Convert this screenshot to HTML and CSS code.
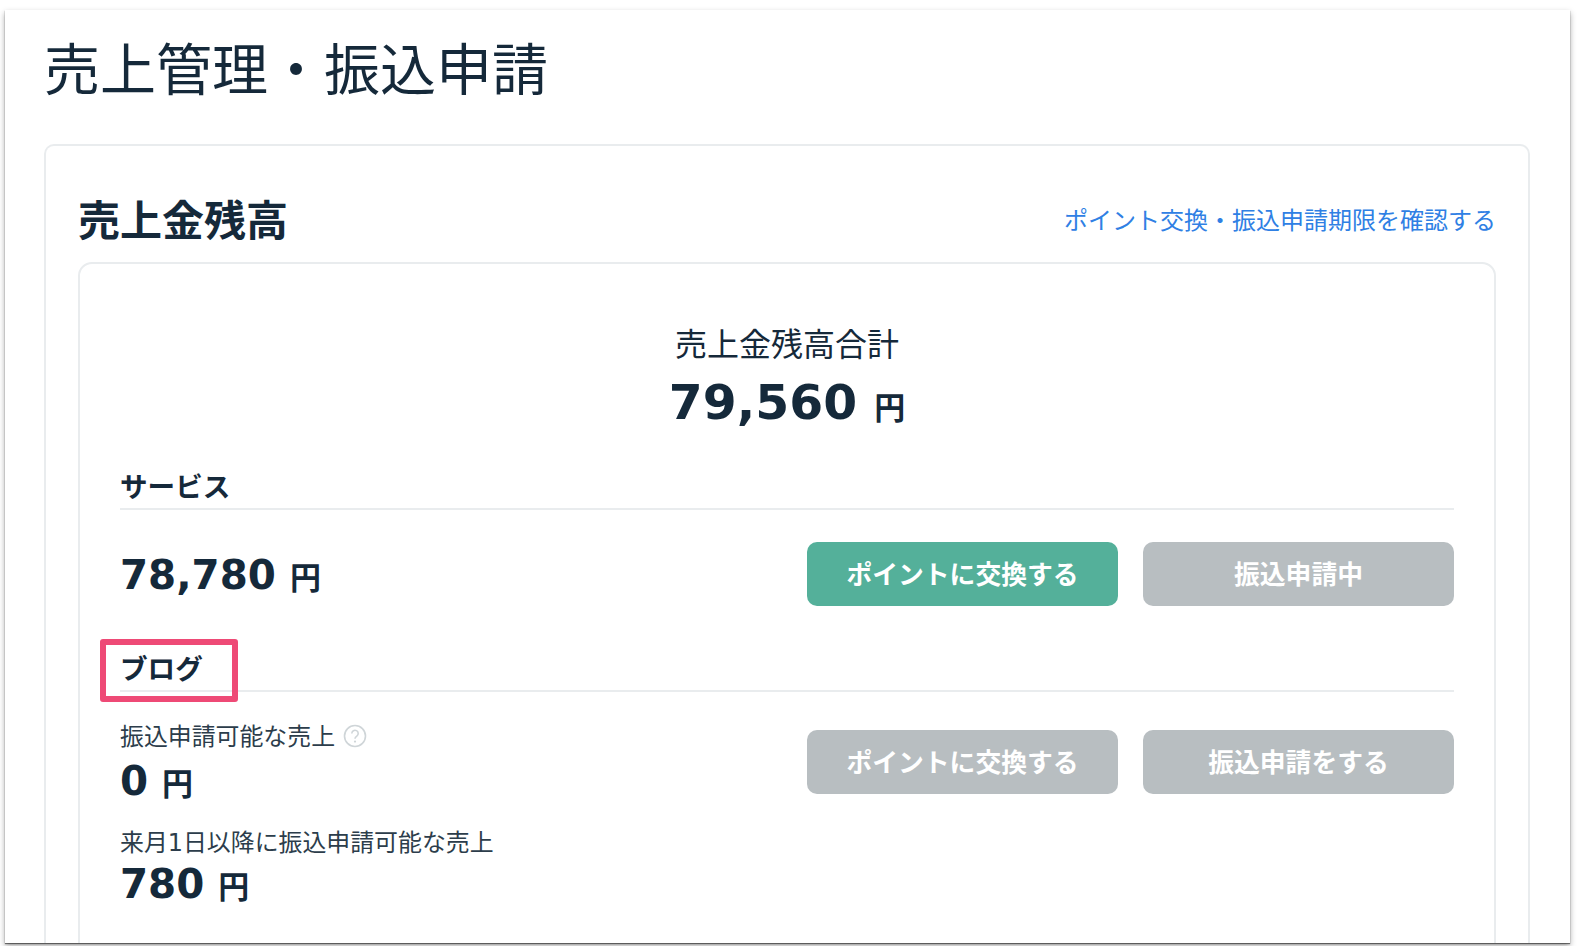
FILE: index.html
```html
<!DOCTYPE html>
<html lang="ja">
<head>
    <meta charset="UTF-8">
    <title>売上管理・振込申請</title>
    <link rel="stylesheet" href="styles.css">
</head>
<body>
    <div class="window">
        <h1 class="page-title">売上管理・振込申請</h1>

        <div class="card">
            <div class="card-header">
                <h2 class="card-title">売上金残高</h2>
                <a class="deadline-link" href="#">ポイント交換・振込申請期限を確認する</a>
            </div>

            <div class="balance-box">
                <!-- Total -->
                <div class="total">
                    <div class="total-label">売上金残高合計</div>
                    <div class="amount amount-large"><span class="num">79,560</span><span class="yen">円</span></div>
                </div>

                <!-- Service -->
                <div class="section-heading">サービス</div>
                <div class="service-row">
                    <div class="amount amount-service"><span class="num">78,780</span><span class="yen">円</span></div>
                    <div class="buttons">
                        <button class="btn btn-green">ポイントに交換する</button>
                        <button class="btn">振込申請中</button>
                    </div>
                </div>

                <!-- Blog -->
                <div class="section-heading">
                    ブログ
                    <span class="highlight"></span>
                </div>
                <div class="blog-row">
                    <div class="blog-amounts">
                        <div class="amount-label">
                            振込申請可能な売上
                            <svg class="help-icon" viewBox="0 0 24 24" width="24" height="24">
                                <circle cx="12" cy="12" r="10.5" fill="none" stroke="#cfd5d8" stroke-width="1.6"/>
                                <path d="M8.8 9.4a3.2 3.2 0 1 1 5 2.7c-1.2.8-1.8 1.4-1.8 2.7" fill="none" stroke="#cfd5d8" stroke-width="1.6"/>
                                <circle cx="12" cy="17.6" r="1.1" fill="#cfd5d8"/>
                            </svg>
                        </div>
                        <div class="amount"><span class="num">0</span><span class="yen">円</span></div>
                        <div class="amount-label amount-label-next">来月1日以降に振込申請可能な売上</div>
                        <div class="amount"><span class="num">780</span><span class="yen">円</span></div>
                    </div>
                    <div class="buttons">
                        <button class="btn">ポイントに交換する</button>
                        <button class="btn">振込申請をする</button>
                    </div>
                </div>
            </div>
        </div>
    </div>
</body>
</html>
```

FILE: styles.css
```css
html, body {
    height: 100%;
}

body {
    margin: 0;
    padding: 10px 12px 3px 5px;
    box-sizing: border-box;
    background-color: #fff;
    color: #15293a;
    font-family: "Noto Sans CJK JP", "Noto Sans", sans-serif;
    overflow: hidden;
}

.window {
    height: 100%;
    padding: 0 40px 0 39px;
    overflow: hidden;
    background-color: #fff;
    box-shadow: 0 1px 1px rgba(0, 0, 0, 0.5), 0 3px 6px rgba(0, 0, 0, 0.35);
}

.page-title {
    margin: 22px 0 44px;
    font-size: 56px;
    line-height: 68px;
    font-weight: 400;
}

.card {
    padding: 42px 32px 0;
    border: 2px solid #e9ecee;
    border-bottom: none;
    border-radius: 10px 10px 0 0;
}

.card-header {
    display: flex;
    justify-content: space-between;
    align-items: center;
    margin-bottom: 14px;
}

.card-title {
    margin: 0;
    font-size: 42px;
    line-height: 60px;
    font-weight: 700;
}

.deadline-link {
    font-size: 24px;
    color: #2f80e4;
    text-decoration: none;
}

.balance-box {
    height: 700px;
    padding: 58px 40px 0;
    border: 2px solid #e9ecee;
    border-radius: 14px 14px 0 0;
}

.total {
    margin-bottom: 27px;
    text-align: center;
}

.total-label {
    font-size: 32px;
    line-height: 40px;
}

.amount {
    display: flex;
    align-items: baseline;
    height: 50px;
    line-height: 50px;
}

.amount-large {
    justify-content: center;
    height: 73px;
    margin-top: 4px;
    line-height: 73px;
}

.amount-service {
    padding-top: 2px;
}

.num {
    font-family: "DejaVu Sans", sans-serif;
    font-size: 40.4px;
    font-weight: 700;
}

.amount-large .num {
    font-size: 48.8px;
}

.yen {
    margin-left: 14px;
    font-size: 31px;
    font-weight: 700;
}

.amount-large .yen {
    margin-left: 17px;
}

.section-heading {
    position: relative;
    padding-bottom: 4px;
    border-bottom: 2px solid #e9ecee;
    font-size: 27.6px;
    line-height: 38px;
    font-weight: 700;
}

/* pink annotation drawn over the heading */
.highlight {
    position: absolute;
    left: -20px;
    top: -9px;
    width: 126px;
    height: 51px;
    border: 6px solid #ee4a76;
    border-radius: 3px;
}

.service-row,
.blog-row {
    display: flex;
    justify-content: space-between;
}

.service-row {
    align-items: center;
    padding: 32px 0 42px;
}

.blog-row {
    padding-top: 27px;
}

.buttons {
    display: flex;
    gap: 25px;
}

.blog-row .buttons {
    margin-top: 11px;
}

.btn {
    width: 311px;
    height: 64px;
    padding: 0 0 4px;
    border: none;
    border-radius: 10px;
    background-color: #b8bec1;
    color: #fff;
    font-family: inherit;
    font-size: 25.8px;
    font-weight: 700;
}

.btn-green {
    background-color: #54b09a;
}

.amount-label {
    display: flex;
    align-items: center;
    gap: 8px;
    color: #2c3d4b;
    font-family: "DejaVu Sans", "Noto Sans CJK JP", sans-serif;
    font-size: 23.9px;
    line-height: 37px;
}

.amount-label-next {
    margin-top: 19px;
    margin-bottom: -3px;
}

.help-icon {
    flex: none;
    margin-bottom: 3px;
}
```
